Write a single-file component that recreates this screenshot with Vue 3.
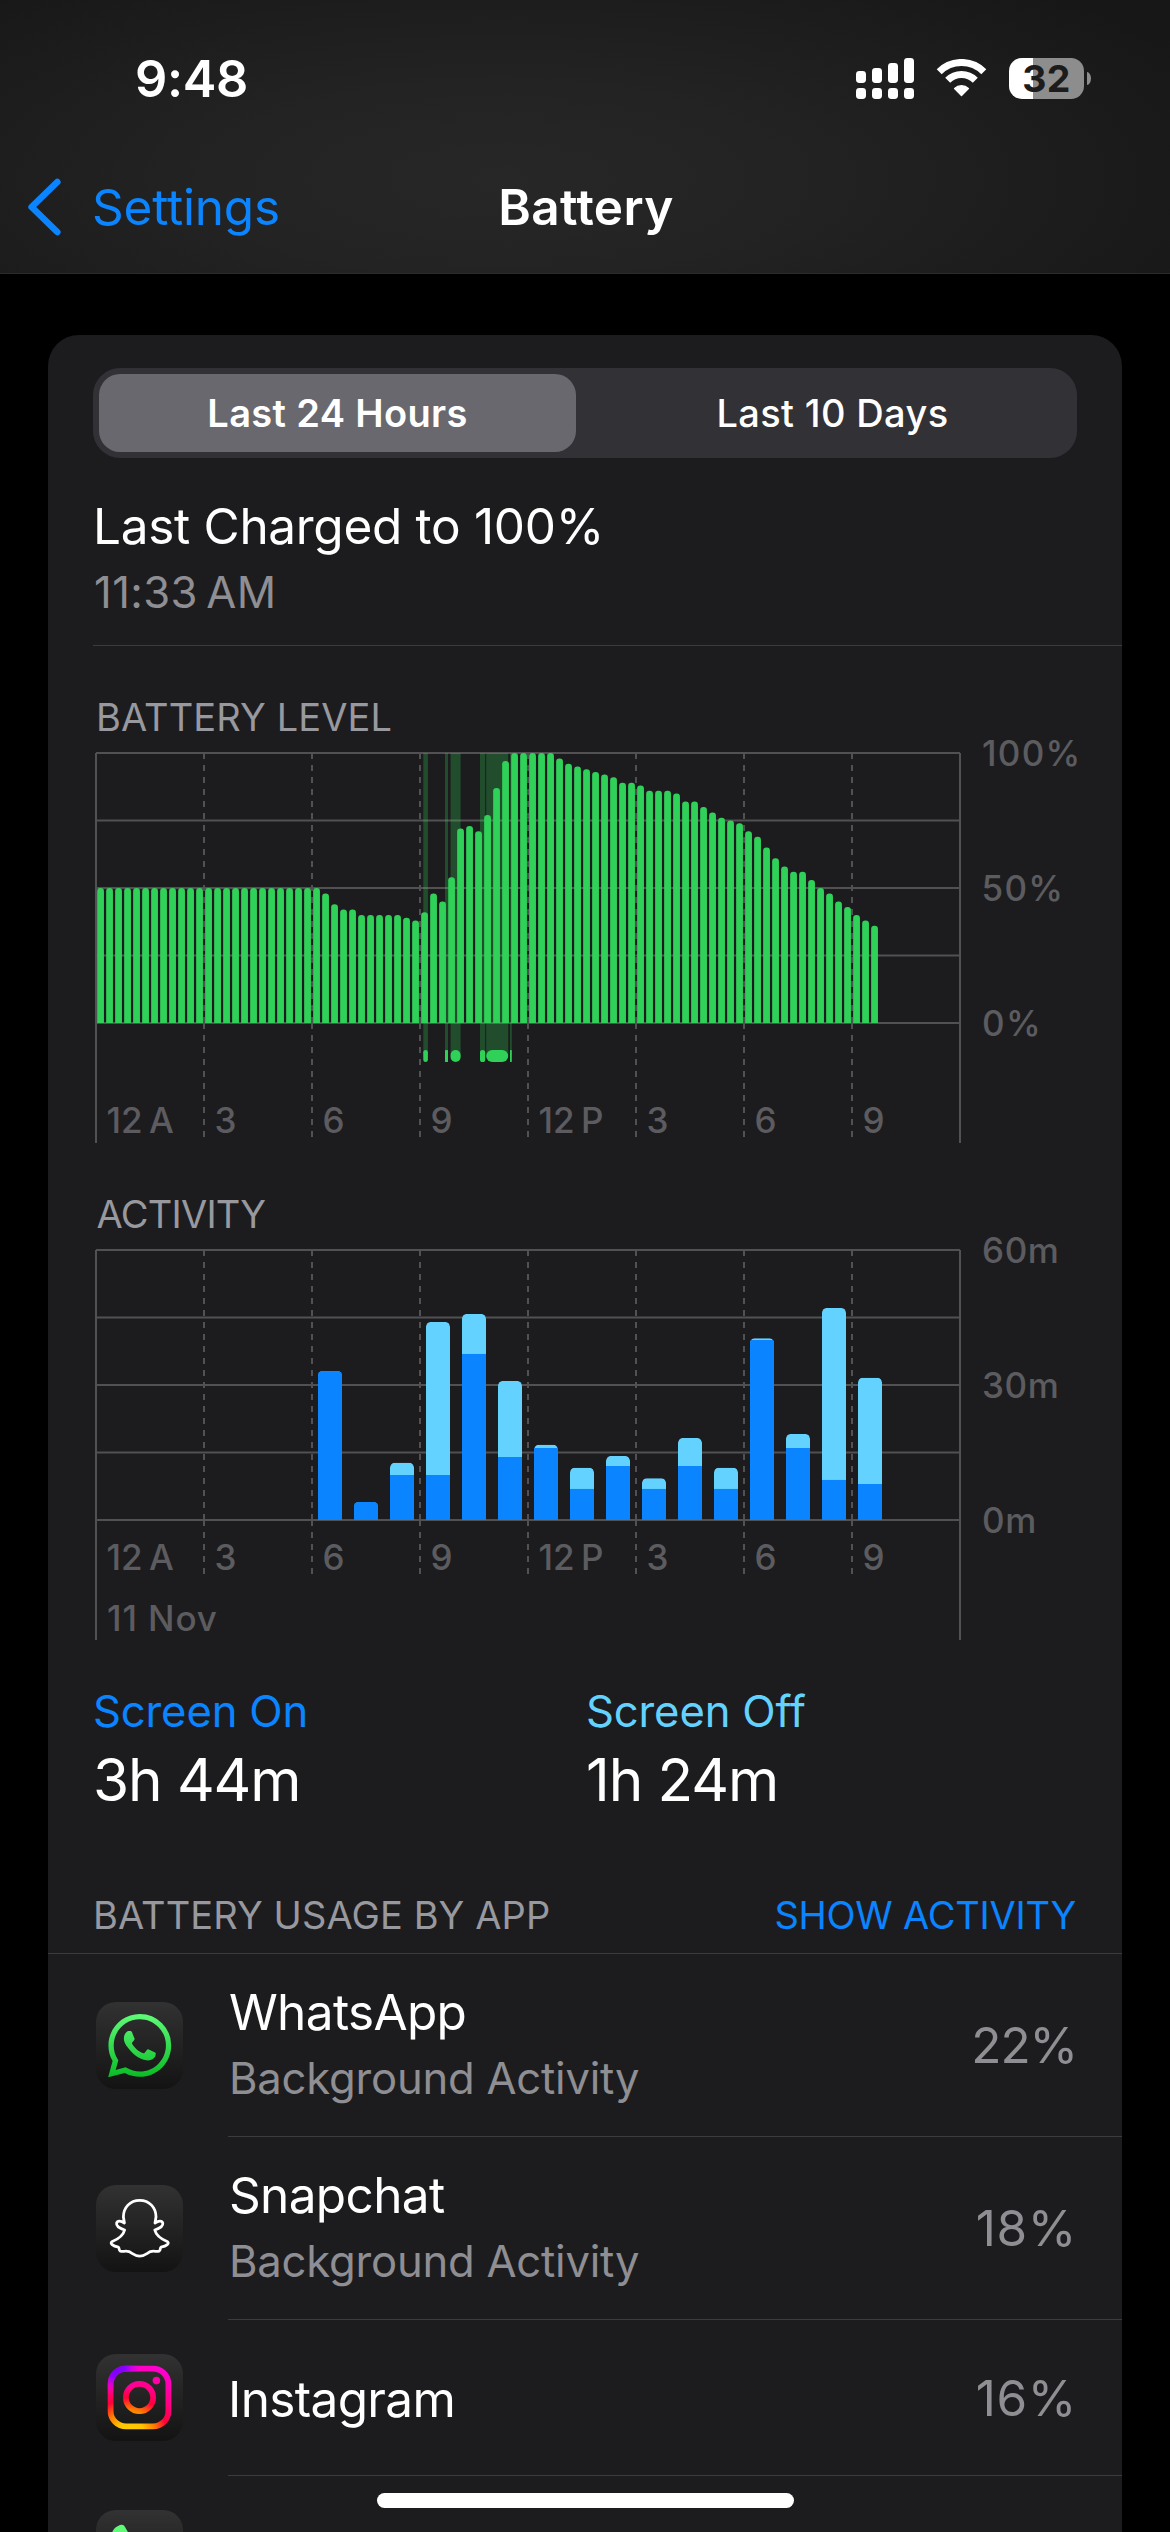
<script setup>
// Plot geometry shared by both charts (px)
const PLOT_X = 3
const PLOT_TOP = 13
const PLOT_W = 864
const PLOT_H = 270
const PLOT_BASE = PLOT_TOP + PLOT_H
const HOUR = PLOT_W / 24

const hourLabels = ['12\u2009A', '3', '6', '9', '12\u2009P', '3', '6', '9']
const gridRows = [0, 0.25, 0.5, 0.75, 1].map((f) => PLOT_TOP + f * PLOT_H)
const gridCols = [3, 6, 9, 12, 15, 18, 21].map((h) => PLOT_X + h * HOUR)

// Battery percentage, one sample per quarter hour
const levels = [
  ...Array(25).fill(50),
  48, 44, 42, 42, 40, 40, 40, 40, 40, 39, 38,
  41, 48, 45, 54, 72, 73, 71, 77, 87, 97, 100,
  100, 100, 100, 100, 98, 96, 95, 94, 93, 92, 91,
  89, 89, 88, 86, 86, 86, 85, 82, 82, 80, 78,
  76, 75, 74, 71, 69, 65, 61, 58, 56, 56, 53,
  50, 48, 45, 43, 40, 38, 36
]

// Charging sessions: [start, width] measured from the left of the chart
const charging = [
  [330.3, 4.6], [352, 3], [357.6, 10], [387, 5.2], [393.2, 22], [417, 1.8]
]

// Minutes of use per hour: [hour, screen on, total]
const activity = [
  [6, 33.1, 33.1], [7, 4, 4], [8, 10, 12.7], [9, 10, 44], [10, 36.9, 45.8],
  [11, 14, 30.9], [12, 16, 16.7], [13, 6.9, 11.6], [14, 12, 14.2], [15, 6.9, 9.3],
  [16, 12, 18.2], [17, 6.9, 11.6], [18, 40, 40.4], [19, 16, 19.1], [20, 8.9, 47.1],
  [21, 8, 31.6]
]

function column(x, w, h, r) {
  const top = PLOT_BASE - h
  return `M${x} ${PLOT_BASE}V${top + r}a${r} ${r} 0 0 1 ${r} ${-r}h${w - 2 * r}a${r} ${r} 0 0 1 ${r} ${r}V${PLOT_BASE}Z`
}

const levelBars = levels.map((v, i) => column(PLOT_X + i * 9 + 1.15, 6.8, (v / 100) * PLOT_H, 3.2))
const activityBars = activity.map(([h, on, total]) => ({
  x: PLOT_X + h * HOUR + 6,
  y: PLOT_BASE - on * 4.5,
  h: on * 4.5,
  shape: column(PLOT_X + h * HOUR + 6, 24, total * 4.5, 4.5)
}))

const apps = [
  { id: 'whatsapp', name: 'WhatsApp', note: 'Background Activity', pct: '22%' },
  { id: 'snapchat', name: 'Snapchat', note: 'Background Activity', pct: '18%', loose: true },
  { id: 'instagram', name: 'Instagram', pct: '16%', loose: true },
  { id: 'phone', name: '', pct: '' }
]
</script>

<template>
  <div class="screen">
    <header class="top">
      <div class="status">
        <span class="time">9:48</span>
        <div class="indicators">
          <svg width="58" height="41" viewBox="0 0 58 41" fill="#fff">
            <rect x="0" y="13" width="10" height="12" rx="3.4" />
            <rect x="16" y="10" width="10" height="15" rx="3.4" />
            <rect x="32" y="5" width="10" height="20" rx="3.4" />
            <rect x="48" y="0" width="10" height="25" rx="3.4" />
            <rect v-for="x in [0, 16, 32, 48]" :key="x" :x="x" y="30" width="10" height="11" rx="3.4" />
          </svg>
          <svg class="wifi" width="51" height="38" viewBox="0 0 51 38" fill="none" stroke="#fff">
            <path d="M3.2 12.7A31.5 31.5 0 0 1 47.8 12.7" stroke-width="7" />
            <path d="M11.7 21.2A19.5 19.5 0 0 1 39.3 21.2" stroke-width="7" />
            <path d="M25.5 36.5L18.6 29.4A10 10 0 0 1 32.4 29.4Z" fill="#fff" stroke-width="1.4" stroke-linejoin="round" />
          </svg>
          <div class="battery">
            <span class="charge">32</span>
            <span class="nub"></span>
          </div>
        </div>
      </div>
      <nav class="nav">
        <a class="back">
          <svg width="37" height="60" viewBox="0 0 37 60" fill="none" stroke="#0a84ff" stroke-width="6.6" stroke-linecap="round" stroke-linejoin="round">
            <path d="M31.3 5L5.6 30L31.3 55" />
          </svg>
          <span>Settings</span>
        </a>
        <h1 class="title">Battery</h1>
      </nav>
    </header>

    <main class="card">
      <div class="segments">
        <div class="segment selected">Last 24 Hours</div>
        <div class="segment">Last 10 Days</div>
      </div>

      <div class="charged">
        <div class="charged-title">Last Charged to 100%</div>
        <div class="charged-time">11:33&#8201;AM</div>
      </div>

      <section class="chart-block">
        <h2 class="chart-title level">BATTERY LEVEL</h2>
        <svg class="chart" width="1029" height="403" viewBox="0 0 1029 403">
          <g class="grid">
            <path v-for="y in gridRows" :key="y" :d="`M3 ${y}H867`" />
            <path d="M3 13V403M867 13V403" />
            <path v-for="x in gridCols" :key="x" :d="`M${x} 13V283M${x} 283V397`" stroke-dasharray="6 6" />
          </g>
          <g v-for="[x, w] in charging" :key="x" fill="#30d158">
            <rect :x="x" y="13" :width="w" height="304" opacity="0.27" />
            <rect :x="x" y="310" :width="w" height="12" :rx="w < 4 ? 0.6 : Math.min(w / 2, 6)" />
          </g>
          <path v-for="(d, i) in levelBars" :key="i" :d="d" fill="#30d158" />
          <text v-for="(t, i) in hourLabels" :key="i" :x="13.4 + i * 108" y="392.6">{{ t }}</text>
          <text class="pct" x="889" y="26">100%</text>
          <text class="pct" x="888.5" y="161">50%</text>
          <text class="pct" x="889" y="296">0%</text>
        </svg>
      </section>

      <section class="chart-block">
        <h2 class="chart-title">ACTIVITY</h2>
        <svg class="chart" width="1029" height="403" viewBox="0 0 1029 403">
          <g class="grid">
            <path v-for="y in gridRows" :key="y" :d="`M3 ${y}H867`" />
            <path d="M3 13V403M867 13V403" />
            <path v-for="x in gridCols" :key="x" :d="`M${x} 13V283M${x} 283V337`" stroke-dasharray="6 6" />
          </g>
          <clipPath v-for="(b, i) in activityBars" :id="'bar' + i" :key="'c' + i"><path :d="b.shape" /></clipPath>
          <g v-for="(b, i) in activityBars" :key="i" :clip-path="`url(#bar${i})`">
            <path :d="b.shape" fill="#64d2ff" />
            <rect :x="b.x" :y="b.y" width="24" :height="b.h" fill="#0a84ff" />
          </g>
          <text v-for="(t, i) in hourLabels" :key="i" :x="13.4 + i * 108" y="332.6">{{ t }}</text>
          <text class="date" x="14" y="394">11 Nov</text>
          <text class="min" x="889" y="26">60m</text>
          <text class="min" x="889" y="161">30m</text>
          <text class="min" x="889" y="296">0m</text>
        </svg>
      </section>

      <div class="totals">
        <div>
          <div class="total-label on">Screen On</div>
          <div class="total-value">3h 44m</div>
        </div>
        <div>
          <div class="total-label off">Screen Off</div>
          <div class="total-value">1h 24m</div>
        </div>
      </div>

      <div class="usage-head">
        <span>BATTERY USAGE BY APP</span>
        <a class="show">SHOW ACTIVITY</a>
      </div>

      <div v-for="app in apps" :key="app.id" class="row" :class="{ short: !app.note }">
        <svg class="icon" width="87" height="87" viewBox="0 0 87 87">
          <defs>
            <linearGradient :id="'tile-' + app.id" x1="0" y1="0" x2="0" y2="1">
              <stop offset="0" stop-color="#323232" />
              <stop offset="1" stop-color="#131313" />
            </linearGradient>
            <linearGradient v-if="app.id === 'whatsapp'" id="wa-green" gradientUnits="userSpaceOnUse" x1="0" y1="0" x2="0" y2="24">
              <stop offset="0" stop-color="#5ffb78" />
              <stop offset="1" stop-color="#0abb25" />
            </linearGradient>
            <template v-if="app.id === 'instagram'">
              <radialGradient id="ig-warm" gradientUnits="userSpaceOnUse" cx="34" cy="81" r="72">
                <stop offset="0" stop-color="#ffd000" />
                <stop offset="0.2" stop-color="#ffc400" />
                <stop offset="0.36" stop-color="#ff7a00" />
                <stop offset="0.52" stop-color="#ff0038" />
                <stop offset="0.68" stop-color="#ff0084" />
                <stop offset="1" stop-color="#ff00cf" />
              </radialGradient>
              <radialGradient id="ig-cool" gradientUnits="userSpaceOnUse" cx="20" cy="14" r="27">
                <stop offset="0" stop-color="#7a00ff" />
                <stop offset="0.35" stop-color="#8a00ff" />
                <stop offset="1" stop-color="#ff00f0" stop-opacity="0" />
              </radialGradient>
            </template>
          </defs>
          <rect width="87" height="87" rx="20" :fill="`url(#tile-${app.id})`" />
          <path
            v-if="app.id === 'whatsapp'"
            transform="translate(12 12) scale(2.64)"
            fill="url(#wa-green)"
            d="M17.472 14.382c-.297-.149-1.758-.867-2.03-.967-.273-.099-.471-.148-.67.15-.197.297-.767.966-.94 1.164-.173.199-.347.223-.644.075-.297-.15-1.255-.463-2.39-1.475-.883-.788-1.48-1.761-1.653-2.059-.173-.297-.018-.458.13-.606.134-.133.298-.347.446-.52.149-.174.198-.298.298-.497.099-.198.05-.371-.025-.52-.075-.149-.669-1.612-.916-2.207-.242-.579-.487-.5-.669-.51-.173-.008-.371-.01-.57-.01-.198 0-.52.074-.792.372-.272.297-1.04 1.016-1.04 2.479 0 1.462 1.065 2.875 1.213 3.074.149.198 2.096 3.2 5.077 4.487.709.306 1.262.489 1.694.625.712.227 1.36.195 1.871.118.571-.085 1.758-.719 2.006-1.413.248-.694.248-1.289.173-1.413-.074-.124-.272-.198-.57-.347m-5.421 7.403h-.004a9.87 9.87 0 01-5.031-1.378l-.361-.214-3.741.982.998-3.648-.235-.374a9.86 9.86 0 01-1.51-5.26c.001-5.45 4.436-9.884 9.888-9.884 2.64 0 5.122 1.03 6.988 2.898a9.825 9.825 0 012.893 6.994c-.003 5.45-4.437 9.884-9.885 9.884m8.413-18.297A11.815 11.815 0 0012.05 0C5.495 0 .16 5.335.157 11.892c0 2.096.547 4.142 1.588 5.945L.057 24l6.305-1.654a11.882 11.882 0 005.683 1.448h.005c6.554 0 11.89-5.335 11.893-11.893a11.821 11.821 0 00-3.48-8.413Z"
          />
          <path
            v-if="app.id === 'snapchat'"
            fill="none"
            stroke="#fff"
            stroke-width="2.8"
            stroke-linejoin="round"
            d="M43.7 15.4C34 15.4 27.4 22.5 27.4 32L28.4 38C25 35.8 21.4 35.3 20.6 38.2C20 41.3 23.6 43.2 28.6 45C27.2 51 22 54.2 15.8 56.8C13.8 58.4 16.5 61 22.4 62.2C23.6 63.4 22.6 65.4 24.4 66.2C27.2 66.8 30 65.6 33 66.6C36.4 68.2 39 71.2 43.7 71.2C48.4 71.2 51 68.2 54.4 66.6C57.4 65.6 60.2 66.8 63 66.2C64.8 65.4 63.8 63.4 65 62.2C70.9 61 73.6 58.4 71.6 56.8C65.4 54.2 60.2 51 58.8 45C63.8 43.2 67.4 41.3 66.8 38.2C66 35.3 62.4 35.8 59 38L60 32C60 22.5 53.4 15.4 43.7 15.4Z"
          />
          <template v-if="app.id === 'instagram'">
            <g v-for="paint in ['url(#ig-warm)', 'url(#ig-cool)']" :key="paint">
              <rect x="14.6" y="14.6" width="57.8" height="57.8" rx="15.5" fill="none" :stroke="paint" stroke-width="5.8" />
              <circle cx="43.5" cy="43.5" r="13.6" fill="none" :stroke="paint" stroke-width="5.8" />
              <circle cx="60.4" cy="26.6" r="3.8" :fill="paint" />
            </g>
          </template>
          <path
            v-if="app.id === 'phone'"
            fill="#5ffb78"
            d="M16 23C17 19 21 15.6 25.5 14.8C27 14.6 28 15.4 29 17L36 29C37 31 36 33 34 35L30 39C34 47 40 53 48 57L52 53C54 51 56 50 58 51L70 58C72 60 72 62 70 65C66 71 60 74 54 72C36 66 22 52 16 34C14.6 30 15 26 16 23Z"
          />
        </svg>
        <div class="detail">
          <div class="labels">
            <div class="name">{{ app.name }}</div>
            <div v-if="app.note" class="note">{{ app.note }}</div>
          </div>
          <span class="share" :class="{ loose: app.loose }">{{ app.pct }}</span>
        </div>
      </div>
    </main>

    <div class="home-bar"></div>
  </div>
</template>

<style>
body {
  margin: 0;
  background: #000;
}
</style>

<style scoped>
.screen {
  position: relative;
  display: flex;
  flex-direction: column;
  width: 1170px;
  height: 2532px;
  overflow: hidden;
  background: #000;
  color: #fff;
  font-family: Inter, 'Liberation Sans', sans-serif;
}
.top {
  flex: none;
  box-sizing: border-box;
  height: 274px;
  border-bottom: 1px solid #2b2b2c;
  background: radial-gradient(ellipse 720px 240px at 500px 180px, #272727 0%, #232323 40%, #1c1c1c 80%, #171717 110%);
}
.status {
  display: flex;
  align-items: center;
  justify-content: space-between;
  height: 156px;
  padding: 0 79px 0 135px;
}
.time {
  font-size: 50.5px;
  font-weight: 600;
  letter-spacing: -0.35px;
}
.indicators {
  display: flex;
  align-items: center;
  gap: 22px;
}
.battery {
  display: flex;
  align-items: center;
  gap: 3px;
}
.charge {
  width: 75px;
  height: 41px;
  border-radius: 13px;
  background: linear-gradient(90deg, #fff 24px, #8d8d8d 24px);
  color: #1c1c1c;
  font-size: 37.5px;
  font-weight: 700;
  line-height: 41px;
  letter-spacing: 0.3px;
  text-align: center;
}
.nub {
  width: 4px;
  height: 13px;
  border-radius: 0 4px 4px 0 / 0 6.5px 6.5px 0;
  background: #8d8d8d;
}
.nav {
  display: grid;
  grid-template-columns: 1fr auto 1fr;
  align-items: center;
  height: 102px;
  padding: 0 26px;
}
.back {
  display: flex;
  align-items: center;
  gap: 29px;
  color: #0a84ff;
  font-size: 49.5px;
  letter-spacing: -0.2px;
}
.title {
  margin: 0 0 0 2px;
  font-size: 49.5px;
  font-weight: 600;
  letter-spacing: 0.38px;
}
.card {
  box-sizing: border-box;
  flex: none;
  width: 1074px;
  height: 2260px;
  margin: 61px 0 0 48px;
  padding-top: 33px;
  border-radius: 31px 31px 0 0;
  background: #1c1c1e;
}
.segments {
  display: flex;
  justify-content: space-between;
  height: 78px;
  margin: 0 45px;
  padding: 6px;
  border-radius: 27px;
  background: #323136;
}
.segment {
  width: 477px;
  border-radius: 21px;
  font-size: 38px;
  font-weight: 500;
  line-height: 78px;
  letter-spacing: 0.35px;
  text-align: center;
}
.segment.selected {
  background: #69686e;
  font-weight: 600;
}
.charged {
  margin: 38px 0 0 45px;
  padding-bottom: 26px;
  border-bottom: 1px solid #3b3b3e;
}
.charged-title {
  font-size: 49.5px;
  line-height: 60px;
  letter-spacing: -0.3px;
}
.charged-time {
  margin: 11px 0 0 1px;
  color: #8e8e93;
  font-size: 43.6px;
  line-height: 52px;
  letter-spacing: 0.4px;
}
.chart-block {
  margin: 48px 0 0 45px;
}
.chart-title {
  margin: 0 0 0 3.5px;
  color: #98989f;
  font-size: 38px;
  font-weight: 400;
  line-height: 46px;
  letter-spacing: -0.75px;
}
.chart-title.level {
  margin-left: 3px;
  letter-spacing: 0.11px;
}
.chart {
  display: block;
  overflow: visible;
}
.grid path {
  fill: none;
  stroke: #515153;
  stroke-width: 2;
}
.chart text {
  fill: #5c5c60;
  font-size: 35px;
  font-weight: 500;
  letter-spacing: 0.18px;
}
.chart .pct {
  letter-spacing: 1.3px;
}
.chart .min {
  letter-spacing: 0.6px;
}
.chart .date {
  letter-spacing: 0.9px;
}
.totals {
  display: grid;
  grid-template-columns: 493px 1fr;
  margin: 46px 45px 0;
}
.total-label {
  font-size: 43.6px;
  line-height: 52px;
  letter-spacing: -0.15px;
}
.on {
  color: #0a84ff;
}
.off {
  color: #64d2ff;
}
.total-value {
  margin-top: 7px;
  font-size: 58.5px;
  line-height: 70px;
  letter-spacing: -1.1px;
}
.usage-head {
  display: flex;
  justify-content: space-between;
  margin-top: 77px;
  padding: 0 46px 15px 45px;
  border-bottom: 1px solid #3b3b3e;
  color: #98989f;
  font-size: 38px;
  line-height: 46px;
  letter-spacing: 0.1px;
}
.show {
  color: #0a84ff;
  letter-spacing: -0.24px;
}
.row {
  display: flex;
  height: 183px;
  padding-left: 48px;
}
.row.short {
  height: 156px;
}
.icon {
  flex: none;
  margin: 48px 45px 0 0;
}
.short .icon {
  margin-top: 34px;
}
.detail {
  box-sizing: border-box;
  display: flex;
  flex: 1;
  align-items: center;
  justify-content: space-between;
  padding-right: 45px;
  border-bottom: 1px solid #3b3b3e;
}
.labels {
  padding: 0 0 3px 1px;
}
.short .labels {
  padding: 2px 0 0;
}
.name {
  font-size: 49.5px;
  line-height: 60px;
  letter-spacing: -0.65px;
}
.note {
  margin: 11px 0 0;
  color: #8e8e93;
  font-size: 43.6px;
  line-height: 52px;
  letter-spacing: -0.22px;
}
.share {
  color: #8e8e93;
  font-size: 49.5px;
  line-height: 60px;
  letter-spacing: -1.1px;
}
.share.loose {
  letter-spacing: 0.6px;
}
.home-bar {
  position: absolute;
  bottom: 24px;
  left: 377px;
  width: 417px;
  height: 15px;
  border-radius: 8px;
  background: #fff;
}
</style>
